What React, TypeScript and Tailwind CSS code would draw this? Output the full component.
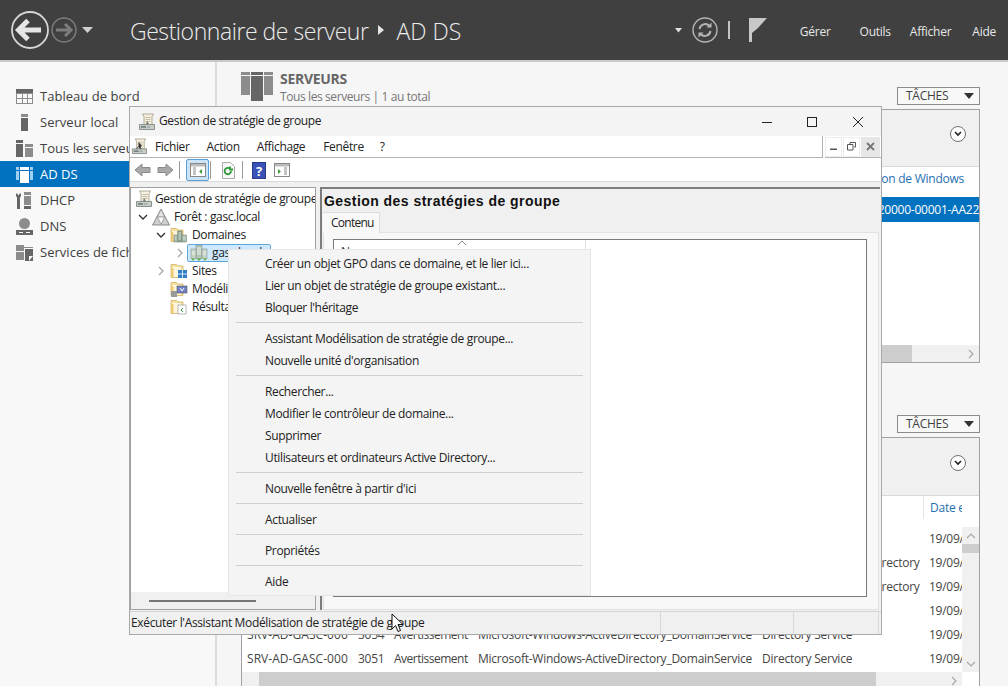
import React from "react";

const F = "font-['Open_Sans','Noto_Sans',sans-serif]";

const Scroll = ({ size = 18, dark }: { size?: number; dark?: boolean }) => (
  <svg width={size} height={size} viewBox="0 0 18 18" className="shrink-0">
    <path d="M4.500 1h11l-1.500 2.500v8.500H6V3.500z" fill="#f6f0dc" stroke="#a8a48e" strokeWidth=".9" />
    <path d="M7.500 4.500h5M7.500 6.500h5M7.500 8.500h5" stroke="#b4b09c" strokeWidth=".8" />
    <path d="M1.500 11.500h15v5h-15z" fill="#c8ccc4" stroke="#7f8a86" strokeWidth=".9" />
    <rect x="3" y="13.200" width="5" height="1.400" fill="#5f6f70" />
    <path d="M9 14h3" stroke="#8b9a98" strokeWidth="1" />
    {dark ? <path d="M8 4l3.500 4.500-1.500 1 1.500 2h-2l-1.500-2-1.500 2H5.500L8 8.500z" fill="#333" /> : <path d="M9 8l2 3H8z" fill="#6f7f80" />}
  </svg>
);

const Folder = ({ children }: { children?: React.ReactNode }) => (
  <svg width="18" height="18" viewBox="0 0 18 18" className="shrink-0">
    <path d="M1 2.500h5.500L8 4h5v11.500H1z" fill="#f6e2a0" stroke="#d2b266" strokeWidth=".8" />
    <path d="M2 5h9v10H2z" fill="#fdf6dd" />
    <path d="M1 5.500l2.500 1V15.500H1z" fill="#ecca74" />
    {children}
  </svg>
);

const Bldg = () => (
  <g>
    <rect x="7.500" y="5" width="4.500" height="11" fill="#8ea596" stroke="#667c6f" strokeWidth=".5" />
    <rect x="12" y="9" width="4.500" height="7" fill="#a9bba9" stroke="#6f8374" strokeWidth=".5" />
    <rect x="4" y="9" width="3.500" height="7" fill="#a9bba9" stroke="#6f8374" strokeWidth=".5" />
    <path d="M8.500 7h2.500M8.500 9h2.500M8.500 11h2.500M8.500 13h2.500M13 11h2.500M13 13h2.500M5 11h1.500M5 13h1.500" stroke="#e8f0e8" strokeWidth=".8" />
  </g>
);

const Domain = () => (
  <svg width="18" height="18" viewBox="0 0 18 18" className="shrink-0">
    <rect x="6" y="1.500" width="6" height="13" fill="#b4c4b8" stroke="#84968a" strokeWidth=".6" />
    <rect x="1" y="5" width="5" height="9.500" fill="#c6d2c6" stroke="#8b9c90" strokeWidth=".6" />
    <rect x="12" y="5" width="5" height="9.500" fill="#c6d2c6" stroke="#8b9c90" strokeWidth=".6" />
    <path d="M7 4h4M7 6h4M7 8h4M7 10h4M2 8h3M2 10h3M13 8h3M13 10h3" stroke="#f2f6f0" strokeWidth=".9" />
    <path d="M1 14.500h4l-2 2.500zM6.500 14.500h5L9 17zM13 14.500h4l-2 2.500z" fill="#69b84a" />
  </svg>
);

const Tri = () => (
  <svg width="18" height="18" viewBox="0 0 18 18" className="shrink-0">
    <path d="M9 1L17.500 17H.5z" fill="#cfcfcf" stroke="#808080" strokeWidth=".9" />
    <path d="M9 1.500L12.500 9H5.500z" fill="#e4e4e4" stroke="#8a8a8a" strokeWidth=".5" />
    <path d="M5.500 9h7L9 16.500z" fill="#fafafa" stroke="#8a8a8a" strokeWidth=".7" />
  </svg>
);

const Chev = ({ open }: { open?: boolean }) => (
  <svg width="10" height="10" viewBox="0 0 10 10" className="shrink-0">
    {open ? (
      <path d="M1 3l4 4 4-4" fill="none" stroke="#333" strokeWidth="1.300" />
    ) : (
      <path d="M3 1l4 4-4 4" fill="none" stroke="#a6a6a6" strokeWidth="1.300" />
    )}
  </svg>
);

const Nav = ({ active, icon, label }: { active?: boolean; icon: React.ReactNode; label: string }) => (
  <div className={`h-[26px] flex items-center pl-[16px] gap-[7px] ${active ? "bg-[#0072c0] text-white" : "text-[#404040]"}`}>
    <span className="w-[17px] h-[17px] flex items-center justify-center">{icon}</span>
    <span className="text-[13px] pt-[2px] tracking-[0.03px] whitespace-nowrap">{label}</span>
  </div>
);

const Gl = ({ c = "#666", l = "#8c8c8c", d, e }: { c?: string; l?: string; d: string; e?: string }) => (
  <svg width="17" height="17" viewBox="0 0 17 17">
    {e ? <path d={e} fill={l} fillRule="evenodd" /> : null}
    <path d={d} fill={c} fillRule="evenodd" />
  </svg>
);

const Taches = () => (
  <div className="ml-auto w-[83px] h-[18px] border border-[#8c8c8c] flex items-center pl-[8px] pr-[5px] text-[12px] text-[#404040] bg-[#f8f8f8]">
    <span>TÂCHES</span>
    <svg width="10" height="6" viewBox="0 0 10 6" className="ml-auto"><path d="M0 0h10L5 6z" fill="#333" /></svg>
  </div>
);

const RoundDown = () => (
  <div className="w-[16px] h-[16px] rounded-full border border-[#707070] bg-white flex items-center justify-center">
    <svg width="8" height="6" viewBox="0 0 8 6"><path d="M1 1l3 3 3-3" fill="none" stroke="#222" strokeWidth="1.600" /></svg>
  </div>
);

const EvRow = ({ id, log, d }: { id?: string; log?: string; d: string }) => (
  <div className="h-[24px] flex items-center text-[12px] text-[#444] whitespace-nowrap">
    <span className="w-[116px] pl-[5px] shrink-0 overflow-hidden tracking-[0.05px]">{id ? "SRV-AD-GASC-000" : ""}</span>
    <span className="w-[36px] shrink-0">{id}</span>
    <span className="w-[84px] shrink-0 tracking-[-0.5px]">{id ? "Avertissement" : ""}</span>
    <span className="w-[284px] shrink-0 overflow-hidden">{id ? "Microsoft-Windows-ActiveDirectory_DomainService" : ""}</span>
    <span className="w-[167px] shrink-0 overflow-hidden">{log}</span>
    <span className="w-[33px] shrink-0 overflow-hidden">{d}</span>
  </div>
);

const Tree = ({ pad, chev, icon, label, sel }: { pad: number; chev?: "o" | "c"; icon: React.ReactNode; label: string; sel?: boolean }) => (
  <div className="h-[18px] flex items-center whitespace-nowrap text-[12px] text-[#222]" style={{ paddingLeft: pad }}>
    <span className="w-[14px] flex justify-center shrink-0">{chev ? <Chev open={chev === "o"} /> : null}</span>
    <div className={`flex items-center gap-[4px] pl-[2px] pr-[6px] h-[18px] ${sel ? "w-[84px] border border-[#5fa8de] bg-[#cde8ff] rounded-[2px]" : ""}`}>
      {icon}
      <span>{label}</span>
    </div>
  </div>
);

const items: (string | null)[] = [
  "Créer un objet GPO dans ce domaine, et le lier ici...",
  "Lier un objet de stratégie de groupe existant...",
  "Bloquer l'héritage",
  null,
  "Assistant Modélisation de stratégie de groupe...",
  "Nouvelle unité d'organisation",
  null,
  "Rechercher...",
  "Modifier le contrôleur de domaine...",
  "Supprimer",
  "Utilisateurs et ordinateurs Active Directory...",
  null,
  "Nouvelle fenêtre à partir d'ici",
  null,
  "Actualiser",
  null,
  "Propriétés",
  null,
  "Aide",
];

const events: { id?: string; log?: string }[] = [
  {},
  { log: "Services Web Active Directory" },
  { log: "Services Web Active Directory" },
  {},
  { id: "3054", log: "Directory Service" },
  { id: "3051", log: "Directory Service" },
];

export default function App() {
  return (
    <div className={`${F} relative w-[1008px] h-[686px] overflow-hidden bg-[#f6f6f6] flex flex-col tracking-[-0.25px]`}>
      {/* Header */}
      <header className="h-[62px] shrink-0 bg-[#404040] border-b-2 border-[#c9c9c9] flex items-center text-white">
        <svg width="92" height="42" viewBox="0 0 92 42" className="ml-[10px] shrink-0">
          <circle cx="20" cy="21" r="18" fill="none" stroke="#d6d6d6" strokeWidth="1.800" />
          <path d="M8 21h23M18 11.500L8.500 21l9.500 9.500" fill="none" stroke="#e6e6e6" strokeWidth="5" />
          <circle cx="54" cy="21" r="12" fill="none" stroke="#7c7c7c" strokeWidth="1.500" />
          <path d="M46 21h15M55 15l6 6-6 6" fill="none" stroke="#7c7c7c" strokeWidth="3" />
          <path d="M72 18h11l-5.500 6z" fill="#cfcfcf" />
        </svg>
        <span className="ml-[28px] pt-[2px] text-[23px] font-light text-[#ececec] tracking-[-0.45px] whitespace-nowrap">Gestionnaire de serveur</span>
        <svg width="7" height="10" viewBox="0 0 7 10" className="ml-[10px]"><path d="M0 0l6 5-6 5z" fill="#e5e5e5" /></svg>
        <span className="ml-[11px] pt-[2px] text-[23px] font-light text-[#ececec] tracking-[0px]">AD DS</span>
        <svg width="8" height="5" viewBox="0 0 8 5" className="ml-auto"><path d="M0 0h7L3.500 4.500z" fill="#e0e0e0" /></svg>
        <svg width="26" height="26" viewBox="0 0 26 26" className="ml-[9px]">
          <circle cx="13" cy="13" r="12" fill="none" stroke="#b5b5b5" strokeWidth="1.400" />
          <path d="M7.500 12a5.800 5.800 0 0 1 10-3M18.500 14a5.800 5.800 0 0 1-10 3" fill="none" stroke="#b5b5b5" strokeWidth="2" />
          <path d="M19.500 5.500v5h-5zM6.500 20.500v-5h5z" fill="#b5b5b5" />
        </svg>
        <span className="ml-[10px] w-[2px] h-[18px] bg-[#c4c4c4]" />
        <svg width="18" height="24" viewBox="0 0 18 24" className="ml-[19px]">
          <rect x="0" y="0" width="3" height="24" fill="#c8c8c8" />
          <path d="M3 0h15l-9 10-6 5z" fill="#c8c8c8" />
        </svg>
        <span className="ml-[33px] pt-[3px] text-[12px] text-[#e8e8e8]">Gérer</span>
        <span className="ml-[29px] pt-[3px] text-[12px] text-[#e8e8e8]">Outils</span>
        <span className="ml-[19px] pt-[3px] text-[12px] text-[#e8e8e8]">Afficher</span>
        <span className="ml-[21px] mr-[12px] pt-[3px] text-[12px] text-[#e8e8e8]">Aide</span>
      </header>

      <div className="flex-1 flex min-h-0">
        {/* Sidebar */}
        <aside className="w-[217px] shrink-0 border-r-2 border-[#dcdcdc] pt-[21px] bg-[#f8f8f8]">
          <Nav label="Tableau de bord" icon={<Gl d="M0 1h17v4H0z" e="M0 5h17v11H0zM1 6v4h5V6zM7 6v4h4V6zM12 6v4h4V6zM1 11v4h5v-4zM7 11v4h4v-4zM12 11v4h4v-4z" />} />
          <Nav label="Serveur local" icon={<Gl d="M5 4h7v13H5z" e="M5 0h7v3H5z" />} />
          <Nav label="Tous les serveurs" icon={<Gl d="M0 0h7v3H0zM0 4h7v13H0z" e="M9 4h8v3H9zM9 8h8v9H9z" />} />
          <Nav active label="AD DS" icon={<Gl c="#fff" l="#9fd0ef" d="M4 1h9v3H4zM4 5h9v12H4z" e="M0 1h3v3H0zM14 1h3v3h-3zM0 5h3v9H0zM14 5h3v9h-3z" />} />
          <Nav label="DHCP" icon={<Gl d="M1 1l1 2h1l1-2 1 1v2L4 5.500V17H1V5.500L0 4V2zM8 14h7v3H8z" e="M8 0h7v3H8zM8 4h7v9H8z" />} />
          <Nav label="DNS" icon={<Gl d="M0 12h17v5H0zM3 14v1h4v-1zM10 14v1h4v-1z" e="M8.500 0a5.500 5.500 0 1 1 0 11a5.500 5.500 0 0 1 0-11z" />} />
          <Nav label="Services de fichiers" icon={<Gl d="M9 5h8v12H9l0 0zM13 12v5l4-5z" e="M0 1h8v2h9v1H8v3H0zM0 8h8v8H0z" />} />
        </aside>

        {/* Main */}
        <main className="flex-1 min-w-0 pl-[24px] pr-[28px] pt-[9px] flex flex-col">
          <div className="flex h-[37px] shrink-0">
            <svg width="32" height="30" viewBox="0 0 32 30" className="shrink-0">
              <path d="M0 1h9v3H0zM0 5h9v19H0zM23 1h9v3h-9zM23 5h9v19h-9z" fill="#8c8c8c" />
              <path d="M10 1h12v3H10zM10 5h12v25H10z" fill="#666" />
            </svg>
            <div className="ml-[7px] -mt-[2px]">
              <div className="text-[14px] leading-[19px] font-bold text-[#666] tracking-[-0.3px]">SERVEURS</div>
              <div className="text-[12px] leading-[17px] text-[#777] tracking-[-0.4px]">Tous les serveurs | 1 au total</div>
            </div>
            <div className="ml-auto mt-[16px]"><Taches /></div>
          </div>
          <section className="mt-[1px] h-[254px] shrink-0 border border-[#a0a0a0] bg-white flex flex-col overflow-hidden">
            <div className="h-[57px] bg-[#f0f0f0] border-b border-[#d8d8d8] flex items-center justify-end pr-[13px] pb-[8px] shrink-0">
              <RoundDown />
            </div>
            <div className="h-[24px] pr-[15px] flex items-center justify-end text-[12px] text-[#1f6fb0] shrink-0">Activation de Windows</div>
            <div className="h-[25px] mt-[6px] bg-[#0072c0] text-white text-[12px] flex items-center justify-end whitespace-nowrap overflow-hidden shrink-0">00431-20000-00001-AA22</div>
            <div className="flex-1" />
            <div className="h-[17px] bg-[#f0f0f0] flex items-center shrink-0">
              <div className="ml-[1px] w-[669px] h-full bg-[#cdcdcd]" />
              <svg width="8" height="10" viewBox="0 0 8 10" className="ml-auto mr-[4px]"><path d="M2 1l4 4-4 4" fill="none" stroke="#a8a8a8" strokeWidth="1.200" /></svg>
            </div>
          </section>

          <div className="mt-[52px] flex h-[22px] shrink-0"><Taches /></div>
          <section className="h-[252px] shrink-0 border border-[#a0a0a0] border-b-0 bg-white flex flex-col overflow-hidden">
            <div className="h-[58px] bg-[#f0f0f0] border-b border-[#d8d8d8] flex items-center justify-end pr-[13px] pb-[8px] shrink-0">
              <RoundDown />
            </div>
            <div className="h-[23px] flex justify-end shrink-0 mb-[8px]">
              <div className="w-[39px] mr-[17px] pl-[6px] border-l border-[#e4e4e4] text-[12px] text-[#1f6fb0] flex items-center overflow-hidden whitespace-nowrap"><span className="w-[33px] overflow-hidden">Date et heure</span></div>
            </div>
            <div className="flex-1 flex min-h-0">
              <div className="flex-1 min-w-0 overflow-hidden">
                {events.map((e, i) => (
                  <EvRow key={i} id={e.id} log={e.log} d="19/09/" />
                ))}
              </div>
              <div className="w-[17px] bg-[#f0f0f0] shrink-0 flex flex-col items-center">
                <svg width="10" height="8" viewBox="0 0 10 8" className="mt-[5px]"><path d="M1 6l4-4 4 4" fill="none" stroke="#a8a8a8" strokeWidth="1.200" /></svg>
                <div className="mt-[4px] w-full h-[9px] bg-[#cdcdcd]" />
                <svg width="10" height="8" viewBox="0 0 10 8" className="mt-auto mb-[4px]"><path d="M1 2l4 4 4-4" fill="none" stroke="#a8a8a8" strokeWidth="1.200" /></svg>
              </div>
            </div>
            <div className="h-[17px] flex shrink-0">
              <div className="flex-1 bg-[#f0f0f0] flex items-center">
                <div className="ml-[17px] w-[617px] h-full bg-[#cdcdcd]" />
                <svg width="8" height="10" viewBox="0 0 8 10" className="ml-auto mr-[4px]"><path d="M2 1l4 4-4 4" fill="none" stroke="#a8a8a8" strokeWidth="1.200" /></svg>
              </div>
              <div className="w-[17px]" />
            </div>
          </section>
        </main>
      </div>

      {/* GPMC window */}
      <div className="absolute left-[129px] top-[106px] w-[753px] h-[529px] bg-[#f0f0f0] border border-[#a9a9a9] flex flex-col tracking-[-0.35px]">
        <div className="h-[29px] shrink-0 bg-[#f4f4f4] flex items-center pl-[8px] text-[12px] text-[#222]">
          <Scroll />
          <span className="ml-[3px] -mt-[1px]">Gestion de stratégie de groupe</span>
          <svg width="12" height="12" viewBox="0 0 12 12" className="ml-auto"><path d="M1 6.500h10" stroke="#222" strokeWidth="1" /></svg>
          <svg width="12" height="12" viewBox="0 0 12 12" className="ml-[33px]"><rect x="1.500" y="1.500" width="9" height="9" fill="none" stroke="#222" strokeWidth="1" /></svg>
          <svg width="12" height="12" viewBox="0 0 12 12" className="ml-[34px] mr-[17px]"><path d="M1 1l10 10M11 1L1 11" stroke="#222" strokeWidth="1" /></svg>
        </div>
        <div className="h-[22px] shrink-0 bg-white flex items-center text-[12px] text-[#222]">
          <div className="flex-1 h-full flex items-center pl-[1px] border-b border-[#b4b4b4]">
            <Scroll size={17} dark />
            <span className="ml-[7px]">Fichier</span>
            <span className="ml-[17px]">Action</span>
            <span className="ml-[17px]">Affichage</span>
            <span className="ml-[18px]">Fenêtre</span>
            <span className="ml-[16px]">?</span>
          </div>
          <div className="w-[1px] h-full bg-[#b4b4b4] mr-[2px]" />
          <div className="w-[56px] h-full flex gap-[1px] items-center border-b border-[#b4b4b4]">
            <div className="w-[17px] h-[20px] bg-white border border-[#ededed] flex items-center justify-center"><svg width="9" height="9" viewBox="0 0 9 9"><rect x="1" y="6.500" width="7" height="1.500" fill="#555" /></svg></div>
            <div className="w-[17px] h-[20px] bg-white border border-[#ededed] flex items-center justify-center"><svg width="9" height="9" viewBox="0 0 9 9"><path d="M3 2V.5h5.500V5H7M.5 2.500H6V8H.5z" fill="none" stroke="#555" /></svg></div>
            <div className="w-[19px] h-[20px] bg-[#e6e6e6] flex items-center justify-center"><svg width="9" height="9" viewBox="0 0 9 9"><path d="M1 1l7 7M8 1L1 8" stroke="#777" strokeWidth="1.800" /></svg></div>
          </div>
        </div>
        <div className="h-[24px] shrink-0 bg-white border-b border-[#d8d8d8] flex items-center pl-[4px] pt-[1px]">
          <svg width="17" height="14" viewBox="0 0 17 14"><path d="M1 7l7-6v3.500h8v5H8V13z" fill="#a9a9a9" stroke="#8a8a8a" /></svg>
          <svg width="17" height="14" viewBox="0 0 17 14" className="ml-[6px]"><path d="M16 7L9 1v3.500H1v5h8V13z" fill="#a9a9a9" stroke="#8a8a8a" /></svg>
          <span className="ml-[5px] w-[1px] h-[18px] bg-[#9a9a9a]" />
          <div className="ml-[6px] w-[23px] h-[22px] rounded-[2px] bg-[#cce4f7] border border-[#5aa0d8] flex items-center justify-center">
            <svg width="16" height="14" viewBox="0 0 16 14"><rect x=".5" y=".5" width="15" height="13" fill="#fff" stroke="#888" /><rect x="1" y="1" width="14" height="2.500" fill="#bbb" /><path d="M3 5h3M3 7h3M3 9h3M3 11h3" stroke="#888" /><path d="M12 6v5L9 8.500z" fill="#3d9a3d" /></svg>
          </div>
          <span className="ml-[1px] w-[1px] h-[18px] bg-[#9a9a9a]" />
          <svg width="15" height="17" viewBox="0 0 15 17" className="ml-[10px]"><path d="M1.500 .5h8l4 4v12h-12z" fill="#f8f8f8" stroke="#aaa" /><path d="M10 9a3.200 3.200 0 1 1-1-2.300M9 4.500v3h3" fill="none" stroke="#2d9a3a" strokeWidth="1.800" /></svg>
          <span className="ml-[6px] w-[1px] h-[18px] bg-[#9a9a9a]" />
          <div className="ml-[9px] w-[14px] h-[17px] bg-[#3a51b5] text-white text-[13px] leading-[17px] font-bold text-center border border-[#2a3a8a]">?</div>
          <svg width="16" height="14" viewBox="0 0 16 14" className="ml-[8px]"><rect x=".5" y=".5" width="15" height="13" fill="#fff" stroke="#888" /><rect x="1" y="1" width="14" height="2.500" fill="#bbb" /><path d="M10 5h3M10 7h3M10 9h3M10 11h3" stroke="#888" /><path d="M4 6v5l3-2.500z" fill="#3d9a3d" /></svg>
        </div>

        <div className="h-[5px] shrink-0" />

        <div className="flex-1 min-h-0 flex">
          {/* Tree */}
          <div className="w-[186px] shrink-0 bg-white border border-[#a0a0a0] flex flex-col overflow-hidden">
            <div className="flex-1 pt-[2px] overflow-hidden">
              <div className="h-[18px] flex items-center gap-[2px] pl-[4px] whitespace-nowrap text-[12px] text-[#222]"><Scroll />Gestion de stratégie de groupe</div>
              <Tree pad={5} chev="o" icon={<Tri />} label="Forêt : gasc.local" />
              <Tree pad={23} chev="o" icon={<Folder><Bldg /></Folder>} label="Domaines" />
              <Tree pad={42} chev="c" icon={<Domain />} label="gasc.local" sel />
              <Tree pad={23} chev="c" icon={<Folder><rect x="8" y="8" width="9" height="8" fill="#2f7fc7" /><path d="M8 12h9M12.500 8v8" stroke="#fff" strokeWidth=".8" /></Folder>} label="Sites" />
              <Tree pad={23} icon={<Folder><rect x="7" y="6" width="10" height="7" fill="#6f80c4" stroke="#555" strokeWidth=".6" /><rect x="1" y="11" width="6" height="6" fill="#9a9a9a" /><path d="M10 8l2 3 2-3" stroke="#fff" fill="none" /></Folder>} label="Modélisation de stratégie" />
              <Tree pad={23} icon={<Folder><rect x="8" y="7" width="8" height="9" fill="#fff" stroke="#999" strokeWidth=".7" /><path d="M13 10l-2 2 2 2" fill="none" stroke="#2d9a3a" /></Folder>} label="Résultats" />
            </div>
            <div className="h-[17px] shrink-0 bg-[#f0f0f0] flex items-center">
              <div className="ml-[18px] w-[107px] h-[2px] bg-[#777]" />
            </div>
          </div>
          {/* Right pane */}
          <div className="ml-[4px] mr-[1px] flex-1 min-w-0 border-t-2 border-l-2 border-[#7d7d7d] bg-[#f0f0f0] flex flex-col">
            <div className="h-[23px] shrink-0 pl-[2px] pt-[2px] text-[14px] leading-[21px] font-bold text-[#111] font-['Liberation_Sans',sans-serif] tracking-[0.45px] whitespace-nowrap">Gestion des stratégies de groupe</div>
            <div className="h-[20px] shrink-0 flex">
              <div className="ml-[1px] w-[57px] h-[21px] bg-[#f8f8f8] border-r border-t border-[#dcdcdc] text-[12px] text-[#222] flex items-center pl-[8px] z-10 tracking-[-0.75px]">Contenu</div>
            </div>
            <div className="flex-1 min-h-0 mx-[1px] bg-[#f8f8f8] border border-[#e2e2e2] pt-[6px] pl-[9px] pb-[12px] pr-[11px]">
              <div className="h-full bg-white border border-[#7a7a7a]">
                <div className="h-[25px] w-[252px] border-r border-[#e0e0e0] flex items-start text-[12px] text-[#333] pl-[7px] pt-[3px] relative">
                  Nom
                  <svg width="10" height="6" viewBox="0 0 10 6" className="absolute left-[123px] top-0"><path d="M1 5l4-4 4 4" fill="none" stroke="#888" /></svg>
                </div>
              </div>
            </div>
          </div>
        </div>

        <div className="h-[23px] shrink-0 mt-[1px] bg-[#f0f0f0] border-t border-[#d4d4d4] flex items-center text-[12px] text-[#222] pl-[1px] whitespace-nowrap">
          Exécuter l'Assistant Modélisation de stratégie de groupe
          <span className="ml-auto w-[1px] h-[22px] bg-[#d8d8d8] mr-[132px]" />
          <span className="w-[1px] h-[22px] bg-[#d8d8d8] mr-[84px]" />
          <span className="w-[1px] h-[22px] bg-[#d8d8d8] mr-[2px]" />
        </div>
      </div>

      {/* Context menu */}
      <div className="absolute left-[228px] top-[249px] w-[363px] h-[347px] bg-[#f4f4f4] border border-[#e6e6e6] pt-[2px] px-[7px] text-[12px] text-[#222] tracking-[-0.35px]">
        {items.map((t, i) =>
          t === null ? (
            <div key={i} className="h-[9px] flex items-center"><div className="w-full h-[1px] bg-[#cfcfcf]" /></div>
          ) : (
            <div key={i} className="h-[22px] flex items-center pl-[29px] pt-[2px] whitespace-nowrap">{t}</div>
          )
        )}
      </div>

      {/* Cursor */}
      <svg width="13" height="20" viewBox="0 0 13 20" className="absolute left-[391px] top-[613px]">
        <path d="M1 1v15l3.500-3.500 2.500 6 2.500-1-2.500-6h5z" fill="#fff" stroke="#111" strokeWidth="1" />
      </svg>
    </div>
  );
}
